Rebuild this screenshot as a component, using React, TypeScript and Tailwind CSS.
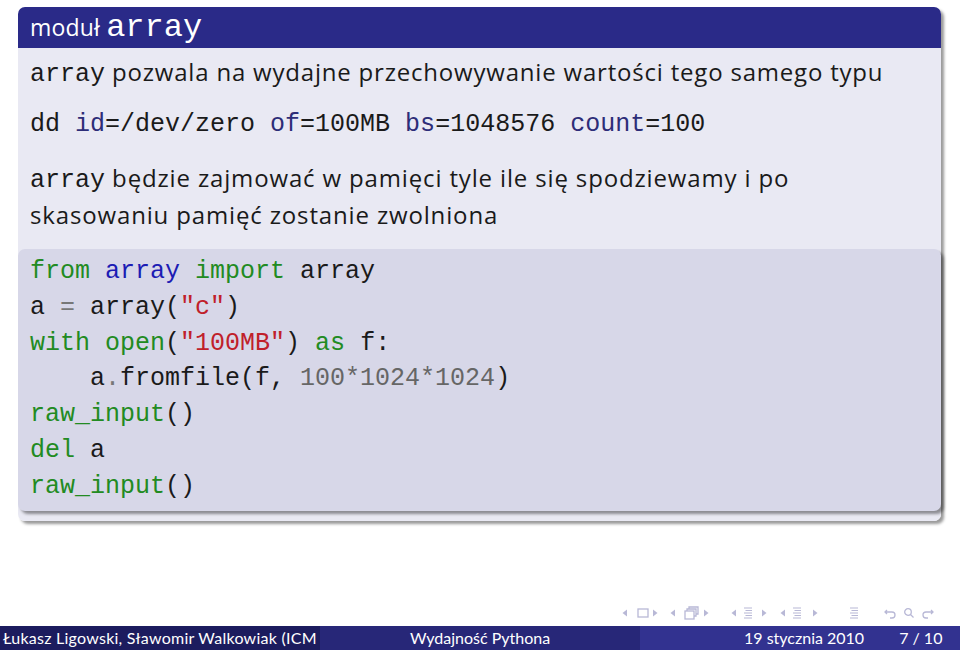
import React from 'react';

const sans = { fontFamily: '"Open Sans", "DejaVu Sans", sans-serif' };
const foot = { fontFamily: 'Lato, "DejaVu Sans", sans-serif' };
const mono = { fontFamily: '"Liberation Mono", "DejaVu Sans Mono", monospace' };

function Tri({ dir }: { dir: 'l' | 'r' }) {
  return (
    <svg width="6" height="8" viewBox="0 0 6 8">
      {dir === 'l' ? <path d="M5 0.5 L0.5 4 L5 7.5 Z" fill="#b8b8d6" /> : <path d="M1 0.5 L5.5 4 L1 7.5 Z" fill="#b8b8d6" />}
    </svg>
  );
}

function Lines() {
  return (
    <svg width="10" height="14" viewBox="0 0 10 14" stroke="#b8b8d6" strokeWidth="1.2">
      <path d="M1 2 H9 M2.5 4.5 H9 M1 7 H9 M2.5 9.5 H9 M1 12 H9" />
    </svg>
  );
}

function NavSymbols() {
  return (
    <div className="flex items-center h-[16px] pl-[622px]">
      <Tri dir="l" />
      <svg width="13" height="10" viewBox="0 0 13 10" className="ml-[9px]"><rect x="1" y="1" width="10" height="8" fill="none" stroke="#b8b8d6" strokeWidth="1.3" /></svg>
      <span className="ml-[2px]"><Tri dir="r" /></span>
      <span className="ml-[12px]"><Tri dir="l" /></span>
      <svg width="15" height="14" viewBox="0 0 15 14" className="ml-[8px]" fill="none" stroke="#b8b8d6" strokeWidth="1.3">
        <rect x="1" y="5" width="9" height="8" />
        <path d="M3 5 V3 H12 V10 H10 M5 3 V1 H14 V8 H12" />
      </svg>
      <span className="ml-[4px]"><Tri dir="r" /></span>
      <span className="ml-[22px]"><Tri dir="l" /></span>
      <span className="ml-[6px]"><Lines /></span>
      <span className="ml-[8px]"><Tri dir="r" /></span>
      <span className="ml-[13px]"><Tri dir="l" /></span>
      <span className="ml-[6px]"><Lines /></span>
      <span className="ml-[10px]"><Tri dir="r" /></span>
      <span className="ml-[31px]"><Lines /></span>
      <svg width="14" height="12" viewBox="0 0 14 12" className="ml-[25px]" fill="none" stroke="#b8b8d6" strokeWidth="1.3">
        <path d="M3 3 L1 5 L3 7 M1 5 H8 A3 3 0 0 1 8 11 H6" />
      </svg>
      <svg width="12" height="12" viewBox="0 0 12 12" className="ml-[5px]" fill="none" stroke="#b8b8d6" strokeWidth="1.3">
        <circle cx="5" cy="5" r="3.3" />
        <path d="M7.5 7.5 L10.5 10.5" />
      </svg>
      <svg width="14" height="12" viewBox="0 0 14 12" className="ml-[5px]" fill="none" stroke="#b8b8d6" strokeWidth="1.3">
        <path d="M11 3 L13 5 L11 7 M13 5 H6 A3 3 0 0 0 6 11 H8" />
      </svg>
    </div>
  );
}

export default function App() {
  return (
    <div className="w-[960px] h-[650px] bg-white flex flex-col overflow-hidden text-[#1a1a1a]">
      {/* block */}
      <div className="mt-[7px] ml-[18px] w-[923px] rounded-[7px] shadow-[3px_3px_3px_rgba(0,0,0,0.4)]">
        <div className="h-[41px] bg-[#2a2a88] rounded-t-[7px] px-[12px] flex items-center text-white">
          <span className="text-[23px] leading-none tracking-[0.2px]" style={sans}>moduł</span>
          <span className="text-[32px] leading-none ml-[6px]" style={mono}>array</span>
        </div>
        <div className="bg-[#e9e9f3] rounded-b-[7px] pt-[7px] pb-[10px]">
          <p className="px-[12px] h-[34px] leading-[34px] text-[24px] tracking-[0.8px]" style={sans}>
            <span style={mono} className="text-[25px] tracking-normal">array</span> pozwala na wydajne przechowywanie wartości tego samego typu
          </p>
          <p className="px-[12px] mt-[19px] h-[34px] leading-[34px] text-[25px] whitespace-pre" style={mono}>
            dd <span className="text-[#2d2d78]">id</span>=/dev/zero <span className="text-[#2d2d78]">of</span>=100MB <span className="text-[#2d2d78]">bs</span>=1048576 <span className="text-[#2d2d78]">count</span>=100
          </p>
          <p className="px-[12px] mt-[19px] leading-[34px] text-[24px] tracking-[0.85px]" style={sans}>
            <span style={mono} className="text-[25px] tracking-normal">array</span> będzie zajmować w pamięci tyle ile się spodziewamy i po
            <br />
            skasowaniu pamięć zostanie zwolniona
          </p>
          {/* code */}
          <div className="mt-[17px] bg-[#d7d7e8] rounded-[7px] pt-[5px] pb-[6px] px-[12px] shadow-[3px_3px_3px_rgba(0,0,0,0.4)]">
            <pre className="text-[25px] leading-[35.8px]" style={mono}>
              <span className="text-[#228b22]">from</span> <span className="text-[#1c1cb4]">array</span> <span className="text-[#228b22]">import</span> array{'\n'}
              a <span className="text-[#777]">=</span> array(<span className="text-[#c0202a]">"c"</span>){'\n'}
              <span className="text-[#228b22]">with</span> <span className="text-[#228b22]">open</span>(<span className="text-[#c0202a]">"100MB"</span>) <span className="text-[#228b22]">as</span> f:{'\n'}
              {'    '}a<span className="text-[#777]">.</span>fromfile(f, <span className="text-[#666]">100*1024*1024</span>){'\n'}
              <span className="text-[#228b22]">raw_input</span>(){'\n'}
              <span className="text-[#228b22]">del</span> a{'\n'}
              <span className="text-[#228b22]">raw_input</span>()
            </pre>
          </div>
        </div>
      </div>

      <div className="flex-1" />
      <NavSymbols />
      <div className="h-[5px]" />

      {/* footline */}
      <div className="h-[24px] flex text-white text-[16px] leading-[24px]" style={foot}>
        <div className="w-[320px] bg-[#1c1c5e] pl-[3px] overflow-hidden whitespace-nowrap tracking-[0.25px]">Łukasz Ligowski, Sławomir Walkowiak (ICM</div>
        <div className="w-[320px] bg-[#272778] text-center">Wydajność Pythona</div>
        <div className="w-[320px] bg-[#323290] flex">
          <span className="ml-[104px]">19 stycznia 2010</span>
          <span className="ml-[35px]">7 / 10</span>
        </div>
      </div>
    </div>
  );
}
